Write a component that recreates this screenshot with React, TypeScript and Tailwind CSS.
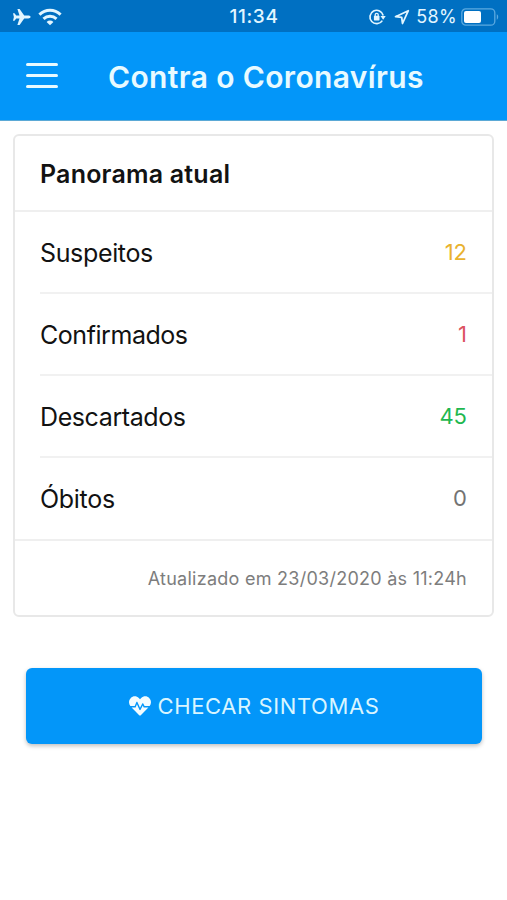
import { FaHeartbeat } from 'react-icons/fa'

const stats = [
  { label: 'Suspeitos', value: 12, color: 'text-[#e9b22e]', tracking: 'tracking-[-0.35px]' },
  { label: 'Confirmados', value: 1, color: 'text-[#dc5461]', tracking: 'tracking-[-0.45px]' },
  { label: 'Descartados', value: 45, color: 'text-[#1fb850]', tracking: 'tracking-[-0.4px]' },
  { label: 'Óbitos', value: 0, color: 'text-[#737373]', tracking: 'tracking-[-0.3px]' },
]

function StatusBar() {
  return (
    <div className="grid h-8 grid-cols-3 items-center bg-[#0070c2] pr-2 pl-3 text-[#e2f6ff]">
      <div className="flex items-center gap-[7px] pt-px">
        {/* Airplane mode */}
        <svg width="19" height="18" viewBox="0 0 19 18" fill="currentColor">
          <path d="M18.600 9c0-.8-1.100-1.400-2.400-1.400h-4L7.600 1H5.400l2.100 6.600H4.200L2.500 5.300H1L1.900 9 1 12.700h1.500l1.700-2.300h3.300L5.400 17h2.200l4.600-6.600h4c1.300 0 2.400-.6 2.400-1.400z" />
        </svg>
        <svg width="24" height="18" viewBox="0 0 24 18" fill="none" stroke="currentColor" strokeWidth="3">
          <path d="M1.400 6.700C7.500.9 16.500.9 22.600 6.700" />
          <path d="M5.500 10.900c3.700-3.500 9.300-3.500 13 0" />
          <path d="M12 17.300 8.600 13.900c2-1.800 4.800-1.800 6.800 0z" fill="currentColor" stroke="none" />
        </svg>
      </div>
      <span className="pr-[3px] pt-[3px] text-center text-[19px] font-medium tracking-[0.6px]">11:34</span>
      <div className="flex items-center justify-end pt-px">
        {/* Orientation lock */}
        <svg width="18" height="18" viewBox="0 0 18 18" fill="none" stroke="currentColor" strokeWidth="1.700">
          <path d="M14.300 12.600A6.700 6.700 0 1 1 15.200 7.500" />
          <path d="M12.500 8h5.200l-2.500 3.800z" fill="currentColor" stroke="none" />
          <rect x="5.900" y="7.800" width="5.600" height="4.600" rx=".6" fill="currentColor" stroke="none" />
          <path d="M7.200 8.200V6.800a1.500 1.500 0 0 1 3 0v1.400" strokeWidth="1.300" />
        </svg>
        {/* Location */}
        <svg className="ml-[8px]" width="16" height="16" viewBox="0 0 16 16" fill="none" stroke="currentColor" strokeWidth="1.800" strokeLinejoin="round">
          <path d="M14.300 1.700 1.500 7.700l6.200.6.800 6.200z" />
        </svg>
        <span className="ml-[6px] text-[18px] tracking-[0.3px]">58%</span>
        <svg className="ml-1" width="38" height="18" viewBox="0 0 38 18">
          <rect x=".8" y=".8" width="33" height="16.400" rx="4" fill="none" stroke="#5ba9e0" strokeWidth="1.300" />
          <rect x="3" y="3" width="17" height="12" rx="2" fill="#fff" />
          <path d="M35.800 6.300v5.400c1.900-.9 1.900-4.500 0-5.400z" fill="#5ba9e0" />
        </svg>
      </div>
    </div>
  )
}

function Header() {
  return (
    <header className="flex h-[89px] items-center border-b border-[#5ba9d6] bg-[#0396f9] pl-[26px] text-[#e8faff]">
      <button className="flex w-8 flex-col gap-2 pb-[2px]">
        <span className="h-[3px] rounded-full bg-current" />
        <span className="h-[3px] rounded-full bg-current" />
        <span className="h-[3px] rounded-full bg-current" />
      </button>
      <h1 className="ml-[50px] pt-[3px] text-[30px] font-semibold tracking-[0.35px]">Contra o Coronavírus</h1>
    </header>
  )
}

export default function App() {
  return (
    <div className="h-[900px] bg-white font-['Inter',sans-serif] whitespace-nowrap">
      <StatusBar />
      <Header />

      <main className="px-[13px] pt-[13px]">
        <section className="rounded-md border-2 border-[#e8e8e8] text-[#121212]">
          <h2 className="flex h-[76px] items-center border-b-2 border-[#efefef] pt-[4px] pl-[25px] text-[25px] font-semibold">
            <span className="tracking-[0.2px]">Panorama atual</span>
          </h2>

          <ul className="pl-[25px]">
            {stats.map((s) => (
              <li
                key={s.label}
                className="flex h-[82px] items-center justify-between border-b-2 border-[#f1f1f1] pr-[25px] last:h-[81px] last:border-b-0"
              >
                <span className={`pt-[3px] text-[25px] ${s.tracking}`}>{s.label}</span>
                <span className={`text-[22px] ${s.color}`}>{s.value}</span>
              </li>
            ))}
          </ul>

          {/* Last update */}
          <p className="flex h-[76px] items-center justify-end border-t-2 border-[#efefef] pr-[25px] text-[18px] text-[#7d7d7d]">
            <span className="tracking-[0.26px]">Atualizado em 23/03/2020 às 11:24h</span>
          </p>
        </section>

        <button className="mx-[13px] mt-[51px] flex h-[76px] w-[456px] items-center justify-center gap-[7px] rounded-md bg-[#0396f9] text-[22px] text-[#d9f5ff] shadow-[0_2px_4px_rgba(0,0,0,0.25)]">
          <FaHeartbeat size={22} className="text-[#f2fcff]" />
          <span className="tracking-[0.6px]">CHECAR SINTOMAS</span>
        </button>
      </main>
    </div>
  )
}
